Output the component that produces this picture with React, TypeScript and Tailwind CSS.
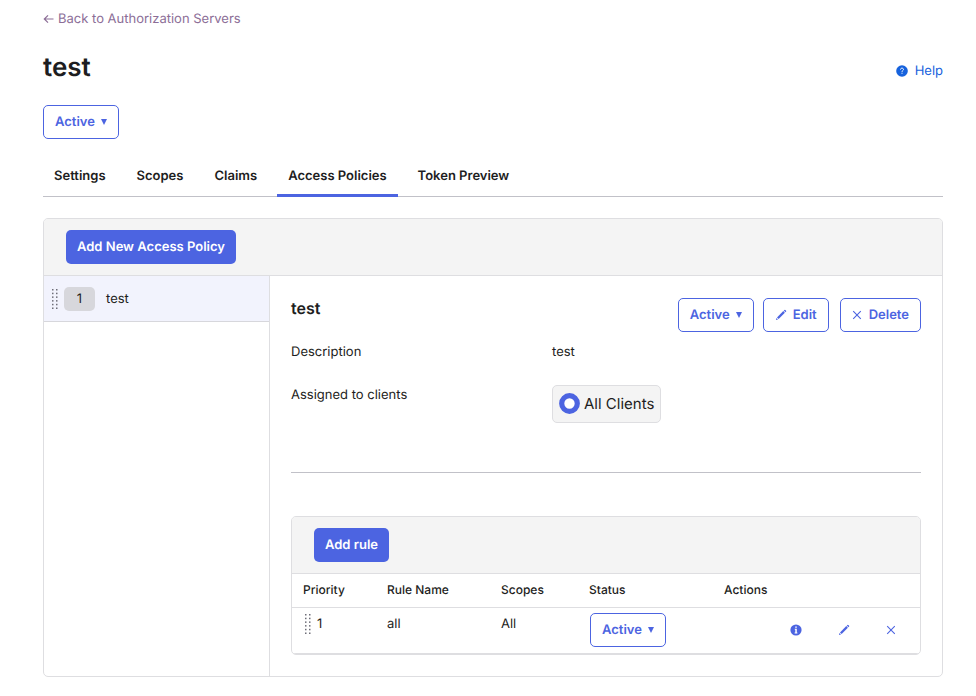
import type { ReactNode } from 'react';
import { clsx } from 'clsx';

const tabs = ['Settings', 'Scopes', 'Claims', 'Access Policies', 'Token Preview'];

function PencilIcon() {
  return (
    <svg width="12" height="12" viewBox="0 0 12 12" fill="currentColor" aria-hidden="true">
      <path d="M.9 11.1l.6-2.1 1.5 1.5z" />
      <path d="M2 8.4L8.3 2.1l1.6 1.6L3.6 10z" />
      <path d="M8.8 1.6l.7-.7a.6.6 0 01.8 0l.8.8a.6.6 0 010 .8l-.7.7z" />
    </svg>
  );
}

function CrossIcon() {
  return (
    <svg width="10" height="10" viewBox="0 0 10 10" fill="none" stroke="currentColor" strokeWidth="1.1" aria-hidden="true">
      <path d="M1.2 1.2l7.6 7.6M8.8 1.2L1.2 8.8" />
    </svg>
  );
}

function InfoIcon() {
  return (
    <svg width="12" height="12" viewBox="0 0 12 12" aria-hidden="true">
      <circle cx="6" cy="6" r="5.6" fill="currentColor" />
      <path d="M5.2 2.5h1.6v1.3H5.2zM4.8 4.8h2v3.7h.6v.9H4.6v-.9h.7V5.7h-.5z" fill="#fff" />
    </svg>
  );
}

function HelpIcon() {
  return (
    <svg width="12" height="12" viewBox="0 0 12 12" aria-hidden="true">
      <circle cx="6" cy="6" r="5.8" fill="currentColor" />
      <path d="M4.5 4.6C4.5 3.7 5.1 3.2 6 3.2s1.5.5 1.5 1.3C7.5 5.5 6 5.5 6 6.8" fill="none" stroke="#fff" />
      <path d="M5.5 7.8h1v1h-1z" fill="#fff" />
    </svg>
  );
}

function ArrowLeftIcon() {
  return (
    <svg width="11" height="10" viewBox="0 0 11 10" fill="none" stroke="currentColor" strokeWidth="1.2" aria-hidden="true">
      <path d="M10.5 5h-9M5 1.3L1.3 5 5 8.7" />
    </svg>
  );
}

function DragHandle() {
  return (
    <svg width="7" height="20" viewBox="0 0 7 20" fill="#6e6e78" aria-hidden="true">
      {[0, 3.7, 7.4, 11.1, 14.8, 18.5].map((y) => (
        <g key={y}>
          <rect x="1" y={y} width="1.5" height="1.5" />
          <rect x="5" y={y} width="1.5" height="1.5" />
        </g>
      ))}
    </svg>
  );
}

function OutlineButton({ children, className }: { children: ReactNode; className?: string }) {
  return (
    <button
      type="button"
      className={clsx(
        'inline-flex h-[34px] items-center rounded-[5px] border border-[#4c64e1] bg-white px-[11px] font-semibold text-[#4c64e1] [text-rendering:inherit]',
        className
      )}
    >
      {children}
    </button>
  );
}

function StatusMenu() {
  return (
    <OutlineButton className="gap-[6px]">
      Active
      <svg width="6" height="6" viewBox="0 0 6 6" fill="currentColor" aria-hidden="true">
        <path d="M0 0h6L3 6z" />
      </svg>
    </OutlineButton>
  );
}

function PrimaryButton({ children }: { children: ReactNode }) {
  return (
    <button
      type="button"
      className="h-[34px] rounded-[5px] bg-[#4c64e1] px-[11px] font-semibold text-white [text-rendering:inherit]"
    >
      {children}
    </button>
  );
}

function RulesTable() {
  return (
    <div className="overflow-hidden rounded-[5px] border border-[#dedee1]">
      <div className="border-b border-[#dedee1] bg-[#f4f4f4] px-[22px] py-[11px]">
        <PrimaryButton>Add rule</PrimaryButton>
      </div>
      <table className="w-full table-fixed text-left">
        <thead className="text-xs">
          <tr className="h-[33px] border-b border-[#dedee1]">
            <th className="w-[84px] pl-[11px] font-medium">Priority</th>
            <th className="w-[114px] pl-[11px] font-medium">Rule Name</th>
            <th className="w-[88px] pl-[11px] font-medium">Scopes</th>
            <th className="w-[135px] pl-[11px] font-medium">Status</th>
            <th className="pl-[11px] font-medium">Actions</th>
          </tr>
        </thead>
        <tbody>
          <tr className="border-b border-[#dedee1] align-top">
            <td className="py-[6px] pl-[12px]">
              <span className="flex items-center gap-[6px]">
                <DragHandle />1
              </span>
            </td>
            <td className="py-[6px] pl-[11px]">all</td>
            <td className="py-[6px] pl-[11px]">All</td>
            <td className="pt-[5px] pb-[6px] pl-[12px]">
              <StatusMenu />
            </td>
            <td className="pt-[5px] pr-[24px] pb-[6px]">
              <div className="flex h-[34px] items-center justify-end gap-9 text-[#4c64e1]">
                <button type="button" aria-label="Rule info">
                  <InfoIcon />
                </button>
                <button type="button" aria-label="Edit rule">
                  <PencilIcon />
                </button>
                <button type="button" aria-label="Delete rule">
                  <CrossIcon />
                </button>
              </div>
            </td>
          </tr>
        </tbody>
      </table>
    </div>
  );
}

function PolicyDetails() {
  return (
    <section className="min-w-0 flex-1 p-[21px]">
      <div className="flex items-start justify-between pt-px">
        <h2 className="text-base leading-5 font-semibold">test</h2>
        <div className="flex">
          <StatusMenu />
          <OutlineButton className="ml-[9px] gap-[6px]">
            <PencilIcon />
            Edit
          </OutlineButton>
          <OutlineButton className="ml-[11px] gap-[7px]">
            <CrossIcon />
            Delete
          </OutlineButton>
        </div>
      </div>

      <dl className="mt-[10px] grid grid-cols-[261px_1fr] gap-y-[23px]">
        <dt>Description</dt>
        <dd>test</dd>
        <dt>Assigned to clients</dt>
        <dd>
          <span className="inline-flex h-[38px] items-center gap-1 rounded-[5px] border border-[#dedee1] bg-[#f4f4f4] px-[6px] text-[15px]">
            <svg width="21" height="22" viewBox="0 0 21 22" aria-hidden="true">
              <circle cx="10.5" cy="10.5" r="7.8" fill="#fff" stroke="#4c64e1" strokeWidth="5.2" />
            </svg>
            All Clients
          </span>
        </dd>
      </dl>

      <hr className="mt-[49px] mb-[43px] border-[#c1c1c8]" />
      <RulesTable />
    </section>
  );
}

export default function App() {
  return (
    <main className="min-h-screen bg-white pr-[33px] pb-5 pl-[43px] font-['Inter',sans-serif] text-[13px] leading-5 text-[#1d1d21] [text-rendering:geometricPrecision]">
      <a href="#" className="flex w-fit items-center gap-1 pt-[9px] text-[#8c6e97]">
        <ArrowLeftIcon />
        Back to Authorization Servers
      </a>

      <header className="mt-[21px] flex items-center justify-between">
        <h1 className="text-[26px] leading-9 font-semibold">test</h1>
        <a href="#" className="flex items-center gap-[7px] pt-[6px] text-[#1662dd]">
          <HelpIcon />
          Help
        </a>
      </header>

      <div className="mt-[19px] flex">
        <StatusMenu />
      </div>

      <nav className="mt-[15px] flex gap-[9px] border-b border-[#c1c1c8]">
        {tabs.map((tab) => (
          <a
            key={tab}
            href="#"
            aria-current={tab === 'Access Policies' ? 'page' : undefined}
            className={clsx(
              '-mb-px border-b-[3px] px-[11px] pt-3 pb-2 font-semibold',
              tab === 'Access Policies' ? 'border-[#4c64e1]' : 'border-transparent'
            )}
          >
            {tab}
          </a>
        ))}
      </nav>

      <div className="mt-[21px] overflow-hidden rounded-[5px] border border-[#dedee1]">
        <div className="border-b border-[#dedee1] bg-[#f4f4f4] px-[22px] py-[11px]">
          <PrimaryButton>Add New Access Policy</PrimaryButton>
        </div>
        <div className="flex">
          <aside className="w-[226px] shrink-0 border-r border-[#dedee1]">
            <a href="#" className="flex h-[46px] items-center border-b border-[#d7d7dc] bg-[#f2f3fd] pl-[7px]">
              <DragHandle />
              <span className="ml-[6px] h-6 w-[31px] rounded-[5px] bg-[#d7d7dc] text-center leading-6">1</span>
              <span className="ml-[11px]">test</span>
            </a>
          </aside>
          <PolicyDetails />
        </div>
      </div>
    </main>
  );
}
